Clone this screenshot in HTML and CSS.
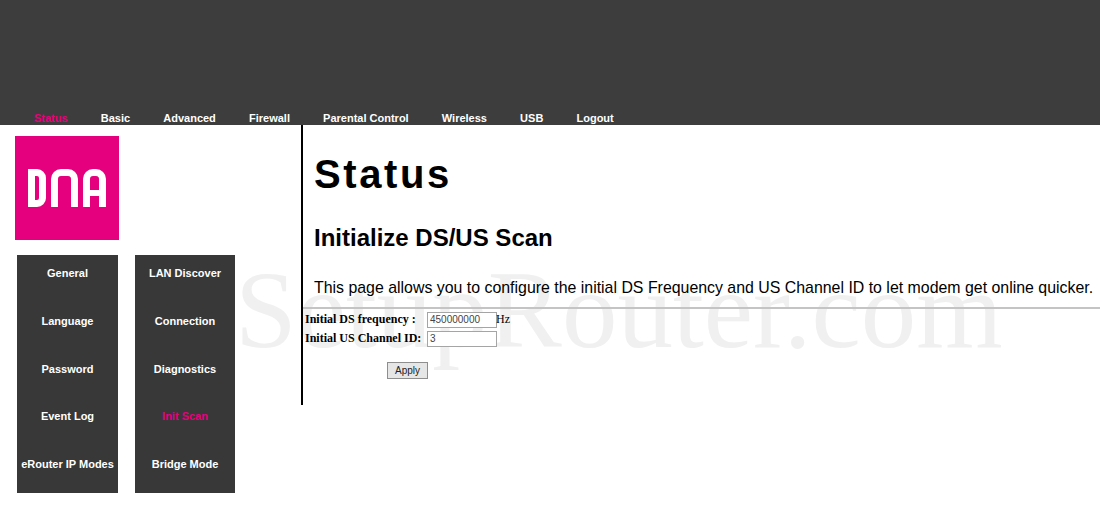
FILE: index.html
```html
<!DOCTYPE html>
<html lang="en">
  <head>
    <meta charset="UTF-8" />
    <title>Status - Init Scan</title>
    <link rel="stylesheet" href="styles.css">
  </head>
  <body>
    <div id="topbar">
      <a class="top active">Status</a>
      <a class="top">Basic</a>
      <a class="top">Advanced</a>
      <a class="top">Firewall</a>
      <a class="top">Parental Control</a>
      <a class="top">Wireless</a>
      <a class="top">USB</a>
      <a class="top">Logout</a>
    </div>

    <div id="page">
      <div id="side">
        <div class="logo" aria-label="DNA">
          <span class="d"></span>
          <span class="n"></span>
          <span class="a"></span>
        </div>
        <div class="menus">
          <div class="menu">
            <a>General</a>
            <a>Language</a>
            <a>Password</a>
            <a>Event Log</a>
            <a>eRouter IP Modes</a>
          </div>
          <div class="menu">
            <a>LAN Discover</a>
            <a>Connection</a>
            <a>Diagnostics</a>
            <a class="active">Init Scan</a>
            <a>Bridge Mode</a>
          </div>
        </div>
      </div>

      <div id="content">
        <h1>Status</h1>
        <h2>Initialize DS/US Scan</h2>
        <p class="intro">This page allows you to configure the initial DS Frequency and US Channel ID to let modem get online quicker.</p>
        <hr />
        <form class="scan">
          <div class="field">
            <label>Initial DS frequency :</label>
            <input type="text" value="450000000" />
            <span class="unit">Hz</span>
          </div>
          <div class="field">
            <label>Initial US Channel ID:</label>
            <input type="text" value="3" />
          </div>
          <button type="button">Apply</button>
        </form>
      </div>
    </div>

    <div id="watermark">SetupRouter.com</div>
  </body>
</html>
```

FILE: styles.css
```css
html,
body {
  height: 100%;
}
body {
  margin: 0;
  overflow: hidden;
  background-color: white;
  font-family: "Liberation Sans", Arial, sans-serif;
  color: black;
}

#topbar {
  height: 125px;
  box-sizing: border-box;
  background-color: #3d3d3d;
  padding: 112px 0 0 34px;
  display: flex;
  gap: 33.15px;
}
.top {
  font-size: 11px;
  line-height: 13px;
  font-weight: bold;
  color: white;
}
.top.active {
  color: #e5007d;
}

#page {
  display: flex;
  align-items: flex-start;
}
#side {
  width: 301px;
  flex: none;
  padding: 11px 0 0 15px;
  box-sizing: border-box;
}

/* logo letters are plain boxes with a thick border */
.logo {
  width: 104px;
  height: 104px;
  background-color: #e5007d;
  box-sizing: border-box;
  padding: 33px 0 0 13px;
  display: flex;
  gap: 5px;
}
.logo span {
  display: block;
  height: 38px;
  box-sizing: border-box;
  border: 7px solid white;
  position: relative;
}
.logo .d {
  width: 18px;
  border-radius: 0 9px 9px 0;
}
.logo .n {
  width: 27px;
  border-bottom: 0;
  border-radius: 10px 10px 0 0;
}
.logo .a {
  width: 23px;
  border-bottom: 0;
  border-radius: 10px 10px 0 0;
}
.logo .a::after {
  content: "";
  position: absolute;
  left: 0;
  right: 0;
  top: 14px;
  height: 6px;
  background-color: white;
}

.menus {
  display: flex;
  gap: 17px;
  margin: 15px 0 0 2px;
}
.menu {
  width: 101px;
  height: 238px;
  background-color: #383838;
  display: flex;
  flex-direction: column;
}
.menu + .menu {
  width: 100px;
}
.menu a {
  flex: none;
  height: 47.75px;
  padding-top: 11px;
  box-sizing: border-box;
  text-align: center;
  font-size: 11px;
  line-height: 14px;
  font-weight: bold;
  color: white;
  white-space: nowrap;
}
.menu a.active {
  color: #e5007d;
}

#content {
  flex: 1;
  min-width: 0;
  height: 280px;
  border-left: 2px solid black;
}
h1 {
  margin: 26px 0 0 11px;
  font-size: 40px;
  line-height: 46px;
  letter-spacing: 2.6px;
}
h2 {
  margin: 27px 0 0 11px;
  font-size: 24px;
  line-height: 28px;
}
.intro {
  margin: 27px 0 0 11px;
  font-size: 15.9px;
  line-height: 18px;
  white-space: nowrap;
}
hr {
  margin: 10px 0 0 0;
  border: 0;
  height: 2px;
  background-color: #c4c4c4;
}

.scan {
  margin: 1px 0 0 2px;
  font-family: "Liberation Serif", "Times New Roman", serif;
  font-size: 12px;
}
.field {
  display: flex;
  align-items: center;
  height: 19px;
}
.field label {
  width: 122px;
  font-weight: bold;
}
.field input {
  width: 70px;
  height: 16px;
  padding: 0 2px;
  box-sizing: border-box;
  border: 1px solid #a5a5a5;
  background-color: white;
  font-family: "Liberation Sans", Arial, sans-serif;
  font-size: 10px;
  color: #444;
}
.unit {
  margin-left: -1px;
}
.scan button {
  display: block;
  margin: 14px 0 0 82px;
  width: 41px;
  height: 17px;
  padding: 0;
  border: 1px solid #8e8e8e;
  background-color: #e6e6e6;
  font-family: "Liberation Sans", Arial, sans-serif;
  font-size: 10px;
  color: #222;
}

#watermark {
  position: absolute;
  left: 235px;
  top: 248px;
  font-family: "Liberation Serif", "Times New Roman", serif;
  font-size: 111px;
  line-height: 124px;
  color: #f0f0f0;
  z-index: -1;
  white-space: nowrap;
}
```
